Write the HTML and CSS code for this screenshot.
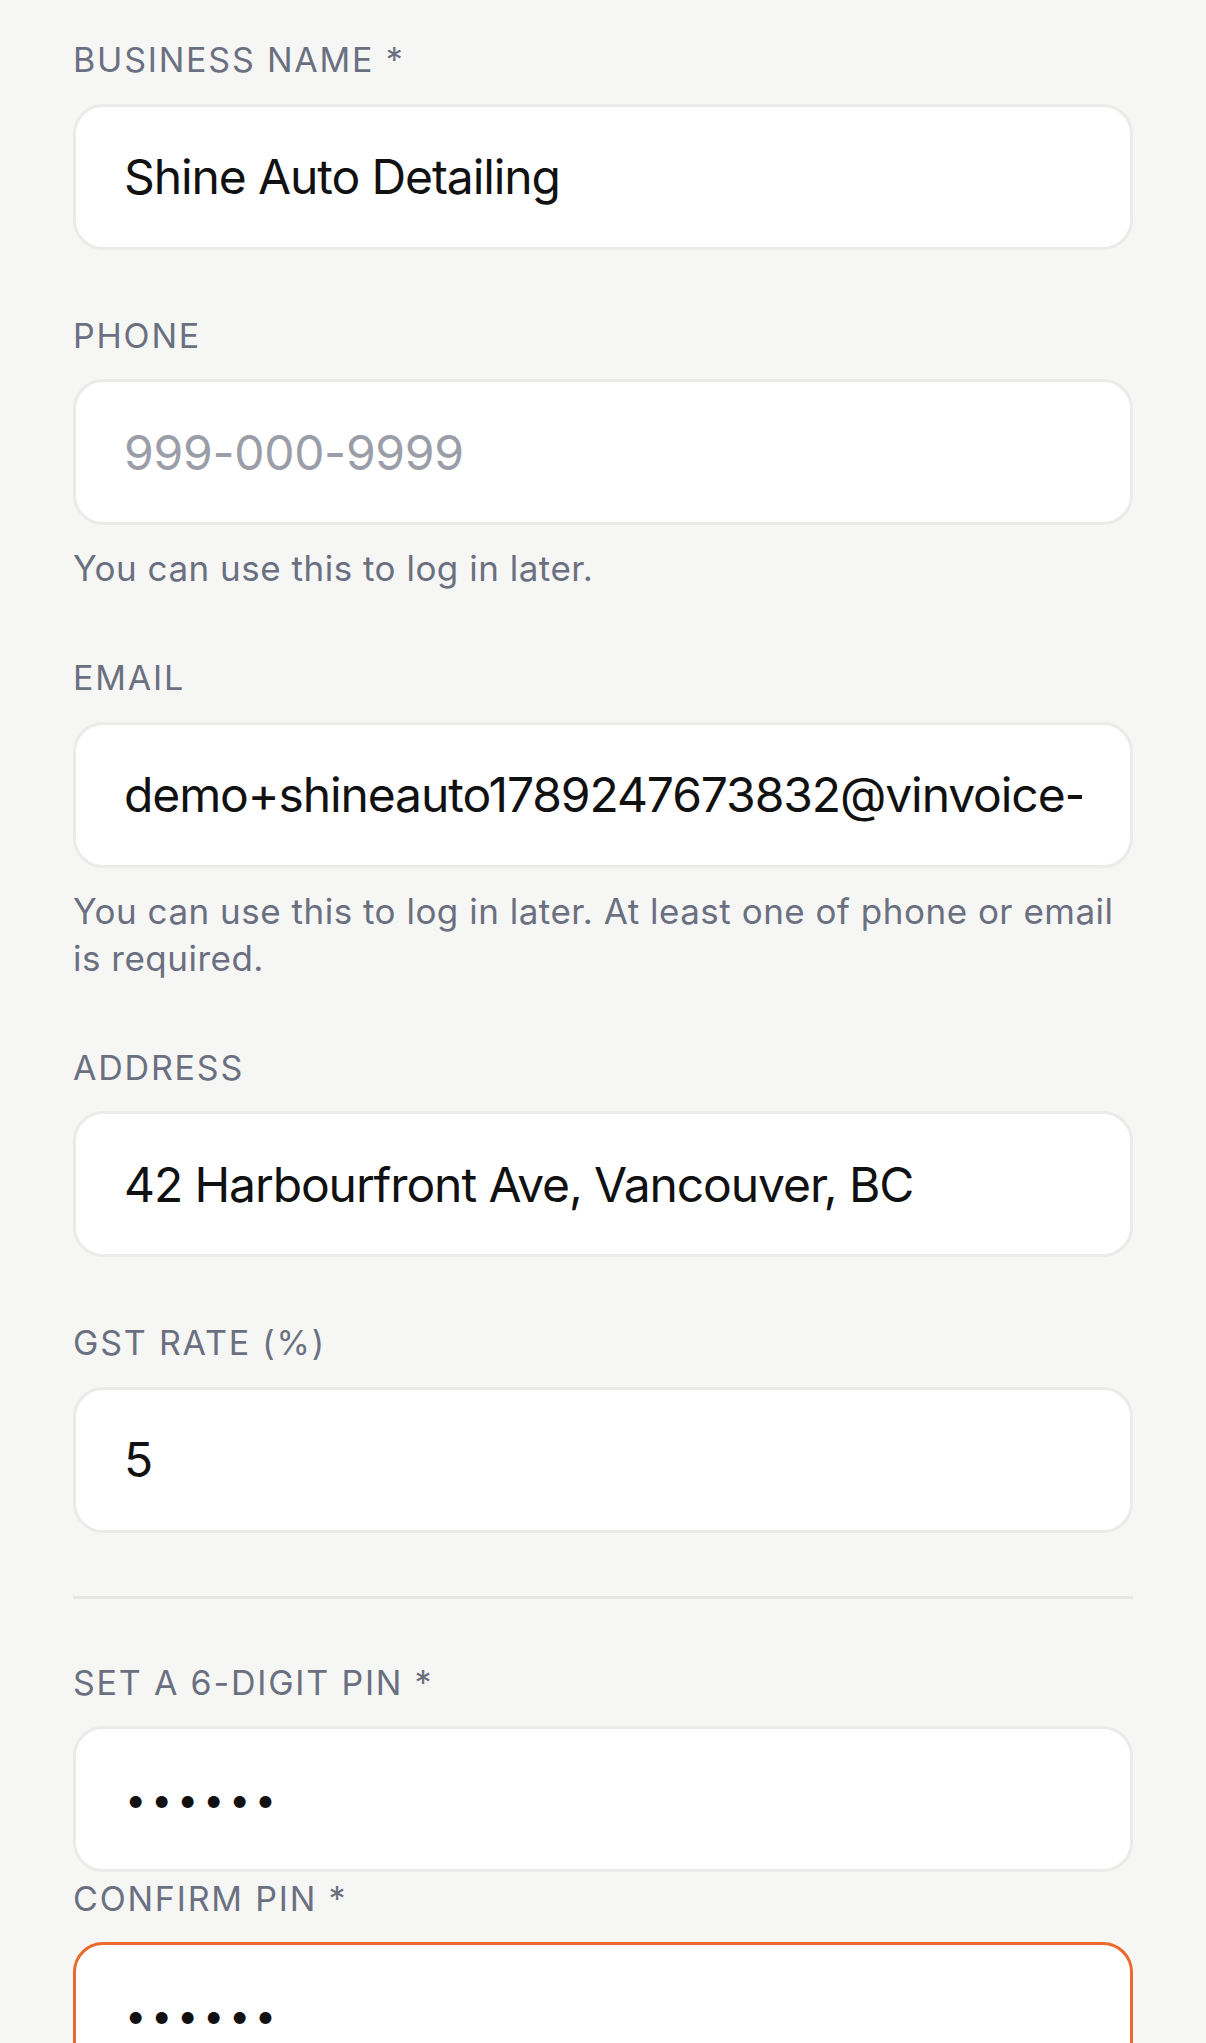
FILE: index.html
```html
<!DOCTYPE html>
<html lang="en">
<head>
<meta charset="utf-8">
<title>Business details</title>
<link rel="stylesheet" href="styles.css">
</head>
<body>
<form class="form">
  <div class="group">
    <div class="field">
      <label class="label" for="bname">Business name *</label>
      <input class="input" id="bname" type="text" value="Shine Auto Detailing">
    </div>
    <div class="field">
      <label class="label" for="phone">Phone</label>
      <input class="input" id="phone" type="tel" placeholder="999-000-9999">
      <p class="help">You can use this to log in later.</p>
    </div>
    <div class="field">
      <label class="label" for="email">Email</label>
      <input class="input" id="email" type="text" value="demo+shineauto1789247673832@vinvoice-">
      <p class="help">You can use this to log in later. At least one of phone or email is required.</p>
    </div>
    <div class="field">
      <label class="label" for="addr">Address</label>
      <input class="input" id="addr" type="text" value="42 Harbourfront Ave, Vancouver, BC">
    </div>
    <div class="field">
      <label class="label" for="gst">GST rate (%)</label>
      <input class="input" id="gst" type="text" value="5">
    </div>
  </div>
  <hr class="divider">
  <div class="group group-pin">
    <div class="field">
      <label class="label" for="pin">Set a 6-digit PIN *</label>
      <input class="input input-pin" id="pin" type="password" value="123456">
    </div>
    <div class="field">
      <label class="label" for="pin2">Confirm PIN *</label>
      <input class="input input-pin input-error" id="pin2" type="password" value="123456">
    </div>
  </div>
</form>
</body>
</html>
```

FILE: styles.css
```css
* { box-sizing: border-box; }

html, body {
  margin: 0;
  background: #f6f6f5;
}

body {
  font-family: "Inter", "Liberation Sans", sans-serif;
  padding: 40px 73px 0;
}

.form {
  display: flex;
  flex-direction: column;
  margin: 0;
}

.group {
  display: flex;
  flex-direction: column;
  gap: 66px;
}

.group-pin {
  gap: 6.5px;
}

.field {
  display: flex;
  flex-direction: column;
}

.label {
  display: block;
  height: 40px;
  line-height: 40px;
  font-size: 34px;
  font-weight: 400;
  letter-spacing: 1.8px;
  text-transform: uppercase;
  color: #6b7080;
  margin-bottom: 23.5px;
  white-space: nowrap;
}

.input {
  display: block;
  width: 100%;
  height: 146px;
  margin: 0;
  padding: 0 48px;
  border: 3px solid #ebebea;
  border-radius: 30px;
  background: #ffffff;
  font-family: "Inter", "Liberation Sans", sans-serif;
  font-size: 48px;
  color: #111111;
  outline: none;
  letter-spacing: -1.1px;
}

.input::placeholder {
  color: #9b9ea8;
  opacity: 1;
  letter-spacing: -0.3px;
}

.input-pin {
  font-size: 38px;
  letter-spacing: 4.6px;
  padding-left: 49px;
}

.input-error {
  border-color: #ea6a2e;
}

.help {
  margin: 20px 0 0;
  font-size: 35px;
  line-height: 47px;
  letter-spacing: 0.5px;
  color: #6b7080;
}

.divider {
  margin: 63px 0 64px;
  border: 0;
  height: 3px;
  background: #e6e6e5;
}
```
